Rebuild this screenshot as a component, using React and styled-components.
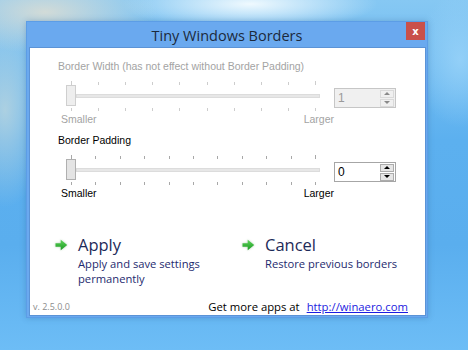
import styled, { createGlobalStyle } from 'styled-components';

const GlobalStyle = createGlobalStyle`
  html, body {
    margin: 0;
    padding: 0;
  }
  body {
    width: 468px;
    height: 350px;
    overflow: hidden;
  }
`;

const Desktop = styled.div`
  width: 468px;
  height: 350px;
  box-sizing: border-box;
  padding: 21px 0 0 26px;
  background:
    radial-gradient(ellipse 150px 55px at 45px 12px, rgba(214, 220, 214, 0.95), rgba(214, 220, 214, 0) 75%),
    radial-gradient(ellipse 60px 130px at 5px 110px, rgba(190, 215, 222, 0.8), rgba(190, 215, 222, 0) 75%),
    radial-gradient(ellipse 170px 35px at 250px 4px, rgba(245, 252, 255, 0.95), rgba(245, 252, 255, 0) 75%),
    radial-gradient(ellipse 60px 90px at 460px 60px, rgba(160, 215, 250, 0.7), rgba(160, 215, 250, 0) 75%),
    linear-gradient(180deg, #86c8f3 0%, #5cb0ef 40%, #5aaeee 70%, #6dbdf6 100%);
  font-family: "Open Sans", "Noto Sans", sans-serif;
`;

const Window = styled.div`
  width: 402px;
  height: 297px;
  box-sizing: border-box;
  display: flex;
  flex-direction: column;
  background: #6aa9ef;
  border: 1px solid #5c9de6;
  box-shadow: 0 0 6px rgba(30, 70, 120, 0.25);
`;

const TitleBar = styled.div`
  height: 25px;
  display: grid;
  grid-template-columns: 1fr auto 1fr;
  align-items: center;
`;

const Title = styled.div`
  grid-column: 2;
  font-size: 14.5px;
  color: #1c2a3c;
  padding-top: 2px;
  white-space: nowrap;
`;

const CloseButton = styled.div`
  grid-column: 3;
  justify-self: end;
  align-self: start;
  width: 19px;
  height: 18px;
  margin-right: 2px;
  background: #c9504b;
  color: #fff;
  font-family: "DejaVu Sans", sans-serif;
  font-size: 10px;
  font-weight: bold;
  display: flex;
  align-items: center;
  justify-content: center;
`;

const Client = styled.div`
  flex: 1;
  margin: 0 1px 1px 2px;
  background: #fff;
  border: 1px solid #5b93d6;
  display: flex;
  flex-direction: column;
  padding: 11px 0 1px 28px;
`;

const FieldLabel = styled.div`
  font-family: "Liberation Sans", Arial, sans-serif;
  font-size: 10.5px;
  line-height: 14px;
  color: ${p => (p.$disabled ? '#a3a3a3' : '#000')};
  margin-top: ${p => p.$gap || 0}px;
`;

const SliderRow = styled.div`
  display: flex;
  align-items: flex-start;
  margin-top: 8px;
  padding-left: 3px;
`;

const Slider = styled.div`
  width: 273px;
  display: flex;
  flex-direction: column;
`;

const TickRow = styled.div`
  width: 254px;
  height: 4px;
  margin-left: 5px;
  box-sizing: border-box;
  padding: 0 4px 0 5px;
  display: flex;
  justify-content: space-between;
  margin-top: ${p => p.$top || 0}px;
`;

const Tick = styled.span`
  width: 1px;
  height: ${p => (p.$long ? 4 : 3)}px;
  align-self: ${p => (p.$bottom ? 'flex-start' : 'flex-end')};
  background: ${p => (p.$disabled ? '#cdcdcd' : '#a8a8a8')};
`;

const Track = styled.div`
  width: 254px;
  height: 21px;
  margin-left: 5px;
  display: flex;
  align-items: center;
`;

const Thumb = styled.div`
  width: 10px;
  height: 21px;
  box-sizing: border-box;
  background: ${p => (p.$disabled ? '#eeeeee' : '#e4e4e4')};
  border: 1px solid ${p => (p.$disabled ? '#cfcfcf' : '#b0b0b0')};
`;

const Rail = styled.div`
  flex: 1;
  height: 4px;
  box-sizing: border-box;
  background: #e7e7e7;
  border: 1px solid #dcdcdc;
`;

const EndLabels = styled.div`
  display: flex;
  justify-content: space-between;
  font-family: "Liberation Sans", Arial, sans-serif;
  font-size: 10.5px;
  line-height: 14px;
  color: ${p => (p.$disabled ? '#a3a3a3' : '#000')};
`;

const SpinBox = styled.div`
  width: 62px;
  height: 20px;
  box-sizing: border-box;
  margin-top: 7px;
  display: flex;
  align-items: center;
  justify-content: space-between;
  padding: 0 1px 0 3px;
  background: ${p => (p.$disabled ? '#f0f0f0' : '#fff')};
  border: 1px solid ${p => (p.$disabled ? '#c6c6c6' : '#a6a6a6')};
  font-family: "Liberation Sans", Arial, sans-serif;
  font-size: 12px;
  color: ${p => (p.$disabled ? '#9a9a9a' : '#000')};
`;

const SpinButtons = styled.div`
  display: flex;
  flex-direction: column;
  gap: 1px;
`;

const SpinButton = styled.div`
  width: 14px;
  height: 8px;
  box-sizing: border-box;
  display: flex;
  align-items: center;
  justify-content: center;
  background: ${p => (p.$disabled ? '#f0f0f0' : '#e6e6e6')};
  border: 1px solid ${p => (p.$disabled ? '#dadada' : '#acacac')};

  &::after {
    content: '';
    border-left: 3px solid transparent;
    border-right: 3px solid transparent;
    ${p => (p.$down ? 'border-top' : 'border-bottom')}: 3px solid ${p => (p.$disabled ? '#8a8a8a' : '#000')};
  }
`;

const Commands = styled.div`
  display: grid;
  grid-template-columns: 187px 1fr;
  margin-top: 34px;
  margin-left: -3px;
`;

const Command = styled.div`
  display: flex;
  gap: 10px;
  align-items: flex-start;
`;

const ArrowIcon = styled.svg`
  flex: none;
  width: 13px;
  height: 12px;
  margin-top: 5px;
  filter: drop-shadow(0 0 1px rgba(40, 120, 40, 0.35));
`;

const CommandText = styled.div`
  display: flex;
  flex-direction: column;
  white-space: nowrap;
`;

const CommandTitle = styled.div`
  font-size: 16.5px;
  line-height: 22px;
  color: #1d2a58;
`;

const CommandNote = styled.div`
  font-size: 11.2px;
  line-height: 15px;
  color: #1e2a6e;
`;

const Footer = styled.div`
  margin-top: auto;
  display: flex;
  align-items: center;
  justify-content: space-between;
  margin-left: -25px;
  padding-right: 17px;
  height: 16px;
`;

const Version = styled.span`
  font-size: 9px;
  color: #8c8c8c;
`;

const Promo = styled.span`
  font-size: 11.3px;
  color: #000;
  display: flex;
  gap: 7px;
`;

const Link = styled.a`
  color: #1c1ce0;
  text-decoration: underline;
`;

const Arrow = () => (
  <ArrowIcon viewBox="0 0 13 12">
    <defs>
      <linearGradient id="ga" x1="0" y1="0" x2="0" y2="1">
        <stop offset="0" stopColor="#5ed35a" />
        <stop offset="1" stopColor="#1b9a22" />
      </linearGradient>
    </defs>
    <path d="M0.5 4.3h5.2V0.8L12.2 6l-6.5 5.2V7.7H0.5z" fill="url(#ga)" />
  </ArrowIcon>
);

const TrackBar = ({ ticks, disabled }) => {
  const list = Array.from({ length: ticks });
  return (
    <Slider>
      <TickRow>
        {list.map((_, i) => (
          <Tick key={i} $disabled={disabled} $long={i === 0 || i === ticks - 1} />
        ))}
      </TickRow>
      <Track>
        <Thumb $disabled={disabled} />
        <Rail />
      </Track>
      <TickRow $top={2}>
        {list.map((_, i) => (
          <Tick key={i} $bottom $disabled={disabled} />
        ))}
      </TickRow>
      <EndLabels $disabled={disabled}>
        <span>Smaller</span>
        <span>Larger</span>
      </EndLabels>
    </Slider>
  );
};

const Spinner = ({ value, disabled }) => (
  <SpinBox $disabled={disabled}>
    <span>{value}</span>
    <SpinButtons>
      <SpinButton $disabled={disabled} />
      <SpinButton $disabled={disabled} $down />
    </SpinButtons>
  </SpinBox>
);

export default function App() {
  return (
    <>
      <GlobalStyle />
      <Desktop>
        <Window>
          <TitleBar>
            <Title>Tiny Windows Borders</Title>
            <CloseButton>x</CloseButton>
          </TitleBar>
          <Client>
            <FieldLabel $disabled>Border Width (has not effect without Border Padding)</FieldLabel>
            <SliderRow>
              <TrackBar ticks={10} disabled />
              <Spinner value="1" disabled />
            </SliderRow>
            <FieldLabel $gap={7}>Border Padding</FieldLabel>
            <SliderRow>
              <TrackBar ticks={11} />
              <Spinner value="0" />
            </SliderRow>
            <Commands>
              <Command>
                <Arrow />
                <CommandText>
                  <CommandTitle>Apply</CommandTitle>
                  <CommandNote>Apply and save settings</CommandNote>
                  <CommandNote>permanently</CommandNote>
                </CommandText>
              </Command>
              <Command>
                <Arrow />
                <CommandText>
                  <CommandTitle>Cancel</CommandTitle>
                  <CommandNote>Restore previous borders</CommandNote>
                </CommandText>
              </Command>
            </Commands>
            <Footer>
              <Version>v. 2.5.0.0</Version>
              <Promo>
                Get more apps at
                <Link href="#">http://winaero.com</Link>
              </Promo>
            </Footer>
          </Client>
        </Window>
      </Desktop>
    </>
  );
}
